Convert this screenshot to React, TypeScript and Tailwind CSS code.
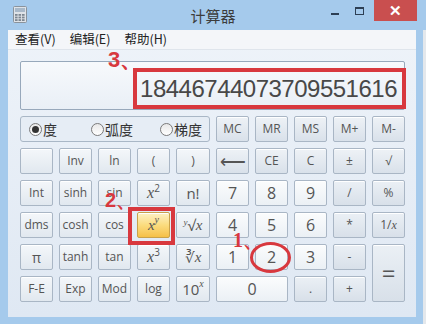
import React from "react";

type V = "fn" | "mem" | "num" | "op" | "hi";

const base =
  "flex items-center justify-center rounded-[2px] border border-[#a9b6c5] text-[#555] shadow-[inset_0_1px_0_#ffffff]";
const variants: Record<V, string> = {
  fn: "bg-gradient-to-b from-[#f4f7fa] to-[#e1e8ef]",
  mem: "bg-gradient-to-b from-[#eef2f6] to-[#d9e1ea]",
  num: "bg-gradient-to-b from-[#fbfcfd] to-[#ebf0f5]",
  op: "bg-gradient-to-b from-[#ebf0f5] to-[#d8e0e9]",
  hi: "bg-gradient-to-b from-[#fdf1c4] via-[#fbdc7e] to-[#f5c046] border-[#c9a24a]",
};

function B({
  children,
  v = "fn",
  cls = "",
}: {
  children?: React.ReactNode;
  v?: V;
  cls?: string;
}) {
  return <div className={`${base} ${variants[v]} ${cls}`}>{children}</div>;
}

const serif = "font-['Liberation_Serif',serif] italic";

function Radio({ on, label }: { on?: boolean; label: string }) {
  return (
    <div className="flex items-center gap-[1px] text-[14px] text-[#333]">
      <div className="flex h-[13px] w-[13px] items-center justify-center rounded-full border border-[#7a7a7a] bg-gradient-to-b from-[#e8e8e8] to-[#ffffff]">
        {on && <div className="h-[7px] w-[7px] rounded-full bg-[#333]" />}
      </div>
      <span>{label}</span>
    </div>
  );
}

function CalcIcon() {
  return (
    <svg width="14" height="17" viewBox="0 0 14 17">
      <rect x="0.5" y="0.5" width="13" height="16" rx="1" fill="#dfe3e8" stroke="#8a939c" />
      <rect x="2" y="2" width="10" height="4" fill="#a9b9c9" />
      {[0, 1, 2].map((r) =>
        [0, 1, 2].map((c) => (
          <rect key={`${r}${c}`} x={2 + c * 3.5} y={8 + r * 2.6} width="2.6" height="1.8" fill="#7d8791" />
        ))
      )}
    </svg>
  );
}

export default function App() {
  return (
    <div className="relative flex h-[324px] w-[426px] flex-col overflow-hidden bg-[#a5caec] font-['Open_Sans','Noto_Sans_CJK_SC',sans-serif]">
      {/* title bar */}
      <div className="relative flex h-[30px] shrink-0 items-center">
        <div className="ml-[13px] mt-[-2px]">
          <CalcIcon />
        </div>
        <div className="absolute left-0 right-0 top-[5px] text-center text-[15px] text-[#3c3c3c] font-['Noto_Sans_CJK_SC',sans-serif]">
          计算器
        </div>
        <div className="absolute left-[331px] top-[13px] h-[2px] w-[8px] bg-[#2d3f54]" />
        <div className="absolute left-[355px] top-[7px] h-[8px] w-[9px] border border-[#2d3f54] border-t-2" />
        <div className="absolute left-[374px] top-0 flex h-[21px] w-[43px] items-center justify-center bg-[#c94f4f] text-[15px] font-bold text-white">
          ✕
        </div>
      </div>
      <div className="flex flex-1">
        <div className="w-[8px] shrink-0" />
        <div className="relative flex h-[287px] w-[408px] flex-col bg-gradient-to-b from-[#eef3f9] to-[#dfe8f3]">
          {/* menu */}
          <div className="flex h-[20px] items-center gap-[14px] border-b border-[#dfe5ec] bg-[#f4f6f9] pl-[7px] text-[12.5px] text-[#222] font-['Noto_Sans_CJK_SC',sans-serif]">
            <span>查看(V)</span>
            <span>编辑(E)</span>
            <span>帮助(H)</span>
          </div>
          <div className="flex flex-col pl-[12px] pt-[11px]">
            {/* display */}
            <div className="flex h-[49px] w-[385px] items-end justify-end rounded-[2px] border border-[#97a8bb] bg-gradient-to-b from-[#f7f9fc] to-[#e9eff6] pb-[7px] pr-[7px]">
              <span className="font-['Liberation_Sans',sans-serif] text-[24px] leading-[26px] tracking-[-0.5px] text-[#484848]">
                18446744073709551616
              </span>
            </div>
            {/* keys */}
            <div className="mt-[6px] grid grid-cols-[33px_33px_33px_33px_34px_33px_33px_33px_33px_33px] grid-rows-[26px_26px_26px_26px_26px_26px] gap-x-[6px] gap-y-[6px] text-[12px]">
              <div className="col-span-5 flex items-center rounded-[3px] border border-[#a9b7c6] bg-[#e6edf5] pl-[8px]">
                <Radio on label="度" />
                <div className="ml-[34px]">
                  <Radio label="弧度" />
                </div>
                <div className="ml-[27px]">
                  <Radio label="梯度" />
                </div>
              </div>
              <B v="mem">MC</B>
              <B v="mem">MR</B>
              <B v="mem">MS</B>
              <B v="mem">M+</B>
              <B v="mem">M-</B>

              <B />
              <B>Inv</B>
              <B>ln</B>
              <B>(</B>
              <B>)</B>
              <B v="mem" cls="text-[18px] leading-none text-[#333]">⟵</B>
              <B v="mem">CE</B>
              <B v="mem">C</B>
              <B v="mem">±</B>
              <B v="mem">√</B>

              <B>Int</B>
              <B>sinh</B>
              <B>sin</B>
              <B cls="text-[16px]">
                <span className={serif}>x</span>
                <sup className="text-[10px]">2</sup>
              </B>
              <B cls="text-[15px]">n!</B>
              <B v="num" cls="text-[16px]">7</B>
              <B v="num" cls="text-[16px]">8</B>
              <B v="num" cls="text-[16px]">9</B>
              <B v="op">/</B>
              <B v="op">%</B>

              <B>dms</B>
              <B>cosh</B>
              <B>cos</B>
              <B v="hi" cls="text-[15px]">
                <span className={serif}>x</span>
                <sup className={`${serif} text-[10px]`}>y</sup>
              </B>
              <B cls="text-[15px]">
                <span className={`${serif} self-start mt-[3px] text-[9px]`}>y</span>
                <span>√</span>
                <span className={serif}>x</span>
              </B>
              <B v="num" cls="text-[16px]">4</B>
              <B v="num" cls="text-[16px]">5</B>
              <B v="num" cls="text-[16px]">6</B>
              <B v="op">*</B>
              <B v="op">
                1/<span className={serif}>x</span>
              </B>

              <B cls="text-[14px]">π</B>
              <B>tanh</B>
              <B>tan</B>
              <B cls="text-[16px]">
                <span className={serif}>x</span>
                <sup className="text-[10px]">3</sup>
              </B>
              <B cls="text-[15px]">
                <span>∛</span>
                <span className={serif}>x</span>
              </B>
              <B v="num" cls="text-[16px]">1</B>
              <B v="num" cls="text-[16px]">2</B>
              <B v="num" cls="text-[16px]">3</B>
              <B v="op">-</B>
              <B v="op" cls="row-span-2 text-[24px]">=</B>

              <B>F-E</B>
              <B>Exp</B>
              <B>Mod</B>
              <B>log</B>
              <B cls="text-[15px]">
                10<sup className={`${serif} text-[10px]`}>x</sup>
              </B>
              <B v="num" cls="col-span-2 text-[16px]">0</B>
              <B v="op">.</B>
              <B v="op">+</B>
            </div>
          </div>

          {/* annotations */}
          <div className="absolute left-[125px] top-[38px] h-[41px] w-[273px] border-[4px] border-[#d8383e]" />
          <div className="absolute left-[100px] top-[19px] font-['Liberation_Sans',sans-serif] text-[22px] font-bold leading-none text-[#d8383e]">
            3、
          </div>
          <div className="absolute left-[120px] top-[177px] h-[38px] w-[47px] border-[4px] border-[#d8383e]" />
          <div className="absolute left-[97px] top-[160px] font-['Liberation_Sans',sans-serif] text-[20px] font-bold leading-none text-[#d8383e]">
            2、
          </div>
          <div className="absolute left-[225px] top-[200px] font-['Liberation_Serif',serif] text-[20px] font-bold leading-none text-[#d8383e]">
            1、
          </div>
          <div className="absolute left-[242px] top-[212px] h-[31px] w-[41px] rounded-[50%] border-[3px] border-[#d8383e]" />
        </div>
        <div className="w-[7px] shrink-0" />
        <div className="w-[3px] shrink-0 bg-[#e4e8ec]" />
      </div>
    </div>
  );
}
